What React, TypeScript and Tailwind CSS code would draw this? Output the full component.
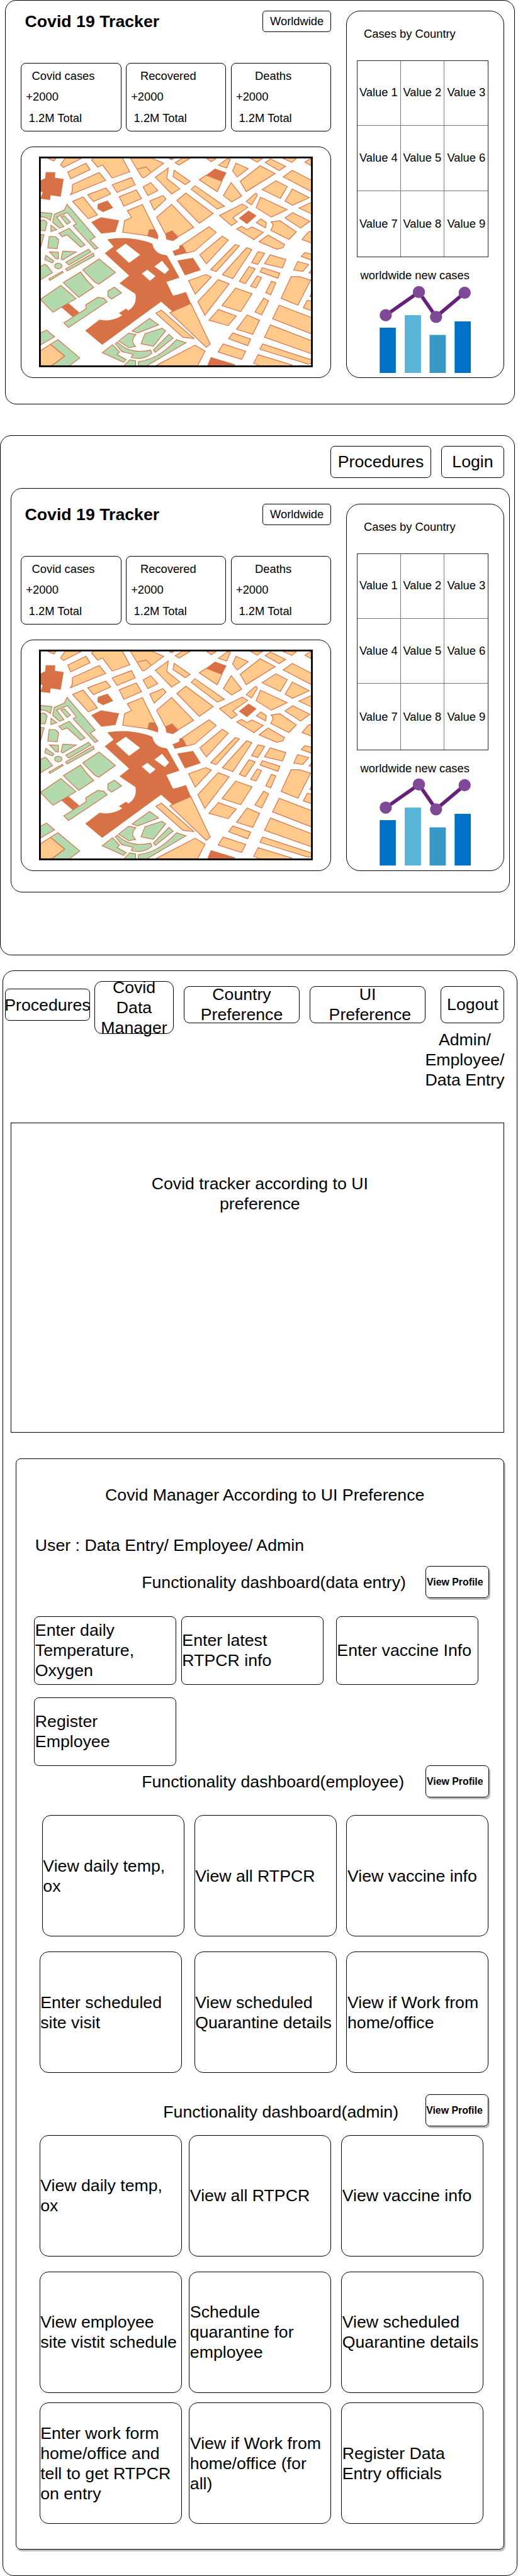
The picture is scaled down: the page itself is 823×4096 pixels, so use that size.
import type { ReactNode } from "react";

/* The page sets --spacing to 0.834px, so every spacing class counts design units. */

const frame = "outline outline-1 -outline-offset-1 outline-black";

const westBlocks = [
  "92,67 127,82 138,67",
  "190,67 165,105 182,119 285,67",
  "206,145 310,95 334,132 223,184",
  "342,75 378,117 405,105 460,180 561,144 517,62 360,62",
  "565,67 630,175 643,178 755,95 690,67",
  "785,67 800,75 812,67",
  "233,217 386,148 423,193 221,275 232,257",
  "320,275 424,237 452,270 353,314",
  "460,218 571,177 592,219 488,262",
  "500,287 598,248 628,297 527,341",
  "637,231 680,206 721,252 665,280",
  "707,175 781,122 772,181 847,241 800,271",
  "675,311 750,280 768,301 700,363",
  "234,313 295,288 376,391 324,413",
  "546,367 633,331 705,476 673,476 664,510 520,490 531,424 571,405",
  "714,404 800,331 926,461 838,516 803,482 764,499",
  "50,1168 107,1131 189,1199 115,1253 50,1253",
];

const eastBlocks = [
  "-20,92 3,105 65,67 20,67",
  "-25,135 -32,171 38,217 66,199",
  "-10,308 41,266 198,383 118,438",
  "-130,953 -99,935 87,1098 25,1091",
  "-50,950 70,897 181,1130 158,1148",
  "-130,1253 94,1136 151,1170 109,1253",
  "160,67 187,86 215,67",
  "227,107 280,68 296,72 275,122",
  "328,95 398,126 335,174 309,139",
  "157,163 248,198 221,258 118,190",
  "411,67 450,89 480,67",
  "495,91 525,70 612,113 575,137",
  "595,67 648,90 674,67",
  "757,67 722,88 757,108",
  "352,198 466,109 552,154 386,257",
  "598,173 650,136 760,192 760,258",
  "300,206 361,282 304,316 256,280",
  "94,223 262,341 221,357 72,244",
  "477,246 557,195 621,229 582,296",
  "650,242 747,292 652,335 609,312",
  "386,314 437,269 446,269 449,275 447,285 417,333",
  "468,289 621,360 530,403 443,349",
  "764,317 688,351 764,387",
  "234,394 364,328 395,348 310,407 335,430 302,452",
  "445,435 470,413 502,435 497,465",
  "529,431 579,424 673,487 631,531 527,480 541,448",
  "608,408 652,378 751,427 697,466",
  "332,471 360,456 392,475 418,459 484,490 431,532",
  "460,544 512,506 606,560 596,578 562,587",
  "764,488 745,486 705,531 764,553",
  "20,562 174,458 215,491 91,598 45,609",
  "250,512 284,535 159,671 121,619",
  "324,560 348,567 215,715 183,704",
  "389,578 419,590 310,755 250,733",
  "454,601 492,611 452,674 417,663",
  "523,619 613,646 594,694 491,670",
  "764,616 721,606 701,628 764,651",
  "681,657 744,674 710,714 658,706",
  "764,700 745,722 764,726",
  "402,687 438,699 382,784 347,770",
  "479,692 579,724 567,753 466,717",
  "450,740 475,749 442,808 411,799",
  "57,767 155,732 187,746 95,844",
  "226,761 289,785 150,965 110,887",
  "326,809 420,842 355,944 248,910",
  "531,770 556,779 527,848 498,836",
  "643,744 690,744 755,764 682,907 586,868",
  "764,830 750,857 764,860",
  "764,884 735,880 713,922 764,940",
  "486,867 515,882 475,963 436,946",
  "575,907 764,980 764,1073 537,985",
  "228,932 330,969 283,1024 173,993",
  "392,963 463,994 424,1074 331,1045",
  "525,1020 764,1112 764,1187 491,1090",
  "309,1066 412,1101 395,1139 286,1099",
  "480,1129 764,1222 757,1240 743,1245 465,1160",
  "254,1129 384,1171 360,1218 226,1175",
  "454,1190 648,1249 640,1256 470,1256 429,1240",
];

const parks = [
  "M50,376L116,383L107,422Q80,400 50,402Z",
  "M50,424Q75,412 88,438L76,482L50,480Z",
  "M110,450L144,475L110,486Z",
  "M202,330L363,517L334,535L379,580L361,588L237,452L256,442L204,377L143,403L184,457L159,467L120,433L129,388L187,362Z",
  "M167,402L187,395L222,432L202,445Z",
  "M155,496L214,467L305,562L281,575L203,505L175,515Z",
  "M50,502L71,504L50,580Z",
  "M100,514L136,515L154,533L146,584L92,580Z",
  "M102,602L152,604L152,643L137,640Z",
  "M178,598L255,602L177,648L168,642Z",
  "M81,622L126,653L118,665L75,647Z",
  "M195,661L325,587L339,603L213,677Z",
  "M193,700L351,610L358,626L203,711Z",
  "M98,757L176,713L180,720L103,766Z",
  "M50,686L74,673L85,678L119,720L50,762Z",
  "M292,705L385,643L479,720L385,786Q370,783 360,774Z",
  "M181,778L280,717Q310,765 355,805L269,862Z",
  "M50,874L167,794L253,869L122,948Z",
  "M437,825L473,804L514,837L457,872L435,856Z",
  "M184,1008L312,927L309,905L379,862L413,868L431,888L211,1035Z",
  "M50,1067L85,1049L131,1088L50,1135Z",
  "M107,1131L150,1104L275,1209L212,1256L111,1256L189,1199Z",
  "M574,1055L674,983L726,1020L606,1066Z",
  "M497,1112L555,1067L596,1076Q560,1110 594,1143L555,1150Z",
  "M648,1070L745,1039L766,1054L695,1142L625,1128Z",
  "M785,1074L808,1096L706,1178L696,1163Z",
  "M404,1179L462,1133L502,1175L488,1190L540,1218L525,1234Z",
  "M478,1128L490,1118Q560,1190 680,1164L687,1182Q640,1225 568,1206L580,1188L516,1173Z",
  "M611,1230Q720,1220 828,1105L882,1122L655,1256L608,1256Z",
  "M560,1220L594,1226L594,1256L525,1256Z",
];

const landmarks = [
  "M80,146L135,147L133,178L183,186L166,286L109,278L105,305L50,298L63,260L50,257L50,194L78,180Z",
  "M378,328L434,309L466,350L408,375L375,356Z",
  "M340,432L396,404L500,421L479,488L398,498Z",
  "M168,918L212,897L272,949L234,975Z",
  "M673,476L708,476L722,502L722,530L662,512Z",
  "M764,499L803,482L838,520L808,540L770,531Z",
  "M432,530Q570,508 690,555Q700,615 773,622L845,750L770,774L808,852L840,845L882,832L910,897L805,944L740,887L403,1134L306,1053L388,990Q460,1005 518,965L498,953L540,927L553,938Q605,905 593,843L502,782L557,738L418,610L468,572ZM538,555L620,619L557,665L481,595ZM745,653L786,703L761,729L702,686ZM661,705L708,742L676,768L630,726Z",
  "M860,562L885,609L818,625L805,599L843,583L844,566Z",
  "M832,652L923,636L967,707L876,736Z",
  "M1048,125L1114,149L1088,198L997,163Z",
  "M1240,366L1286,395L1231,443L1184,410Z",
  "M1024,1204L1163,1246L1160,1256L1003,1256Z",
];

function CityMap() {
  return (
    <svg className="block h-401.5 w-521.5" viewBox="42 57 1565 1205" preserveAspectRatio="none">
      <rect x="42" y="57" width="1565" height="1205" fill="#fff" />
      <g stroke="#d77148" strokeWidth="4.2">
        <g fill="#b3d9ae">
          {parks.map((d) => (
            <path key={d} d={d} />
          ))}
          <ellipse cx="152" cy="683" rx="21" ry="16" />
        </g>
        <g fill="#ffca8c">
          {westBlocks.map((p) => (
            <polygon key={p} points={p} />
          ))}
          <polyline points="605,128 655,116 682,146" fill="none" />
          <g transform="translate(840 0)">
            {eastBlocks.map((p) => (
              <polygon key={p} points={p} />
            ))}
          </g>
        </g>
      </g>
      <g fill="#d87246" fillRule="evenodd">
        {landmarks.map((d) => (
          <path key={d} d={d} />
        ))}
      </g>
      <rect x="47" y="62" width="1555" height="1195" fill="none" stroke="#000" strokeWidth="10" />
    </svg>
  );
}

function CasesChart() {
  return (
    <svg className="block h-166 w-174" viewBox="723 545 174 166">
      <rect x="723.3" y="624.2" width="30.7" height="86.6" fill="#0072c6" />
      <rect x="771" y="600.3" width="31" height="110.5" fill="#59b4d9" />
      <rect x="818.3" y="638" width="31" height="72.8" fill="#3999c6" />
      <rect x="866" y="612.2" width="31" height="98.6" fill="#0072c6" />
      <polyline points="735,600.5 798,556.2 830.7,603.5 885,557.7" fill="none" stroke="#68217a" strokeWidth="6.8" />
      <g fill="#804998">
        <circle cx="734.8" cy="600.4" r="11.6" />
        <circle cx="798" cy="556.3" r="11.6" />
        <circle cx="830.7" cy="603.6" r="11.6" />
        <circle cx="885.2" cy="557.6" r="11.6" />
      </g>
    </svg>
  );
}

function StatCard({ title }: { title: string }) {
  return (
    <div className={`h-131 w-191 rounded-[8px] pt-5 ${frame}`}>
      <div className="flex h-40 w-161 items-center justify-center">{title}</div>
      <div className="flex h-40 w-81 items-center justify-center">+2000</div>
      <div className="flex h-40 w-131 items-center justify-center">1.2M Total</div>
    </div>
  );
}

function ValueRow({ values, last }: { values: number[]; last?: boolean }) {
  return (
    <div className={`grid grid-cols-3 ${last ? "h-126" : "h-124.5 border-b border-[#777]"}`}>
      {values.map((v, i) => (
        <div
          key={v}
          className={`flex items-center justify-center whitespace-nowrap ${i < 2 ? "border-r border-[#777]" : ""}`}
        >
          Value {v}
        </div>
      ))}
    </div>
  );
}

function Tracker() {
  return (
    <div className="flex w-921 justify-between text-[18.35px] leading-[22px]">
      <div className="w-591">
        <div className="flex h-41 justify-between">
          <h1 className="flex w-271 items-center justify-center text-[26.69px] font-bold leading-[32px]">
            Covid 19 Tracker
          </h1>
          <div className={`flex w-131 items-center justify-center rounded-[5px] ${frame}`}>Worldwide</div>
        </div>
        <div className="mt-59 flex justify-between">
          <StatCard title="Covid cases" />
          <StatCard title="Recovered" />
          <StatCard title="Deaths" />
        </div>
        <div className={`mt-29 h-441 rounded-[20px] pl-34 pt-19 ${frame}`}>
          <CityMap />
        </div>
      </div>
      <div className={`h-701 w-301 rounded-[22px] pl-20 ${frame}`}>
        <div className="mt-25 flex h-40 w-201 items-center justify-center">Cases by Country</div>
        <div className="mt-30 h-375 w-250 outline outline-1 -outline-offset-1 outline-[#222]">
          <ValueRow values={[1, 2, 3]} />
          <ValueRow values={[4, 5, 6]} />
          <ValueRow values={[7, 8, 9]} last />
        </div>
        <div className="mt-15 flex h-40 w-221 items-center justify-center">worldwide new cases</div>
        <div className="ml-43">
          <CasesChart />
        </div>
      </div>
    </div>
  );
}

function NavButton({ className, children }: { className: string; children: ReactNode }) {
  return (
    <div className={`flex shrink-0 items-center justify-center whitespace-nowrap text-center ${frame} ${className}`}>
      {children}
    </div>
  );
}

function DashboardHeader({ className, textClass, children }: { className: string; textClass: string; children: ReactNode }) {
  return (
    <div className={`flex h-61 items-center justify-between ${className}`}>
      <div className={`shrink-0 whitespace-nowrap text-center ${textClass}`}>{children}</div>
      <div
        className={`flex h-61 w-121 shrink-0 items-center whitespace-nowrap rounded-[7px] bg-white pl-2 text-[15.85px] font-bold leading-[19px] shadow-[2px_3px_0_#bdbdbd] ${frame}`}
      >
        View Profile
      </div>
    </div>
  );
}

function Card({ lines, className }: { lines: string[]; className: string }) {
  return (
    <div className={`flex w-271 flex-col justify-center whitespace-nowrap pl-2 ${frame} ${className}`}>
      {lines.map((line) => (
        <div key={line}>{line}</div>
      ))}
    </div>
  );
}

const small = "h-131 rounded-[8px]";
const large = "h-231 rounded-[14px]";

export default function App() {
  return (
    <div className="h-[4096px] w-[823px] overflow-hidden bg-white font-['Liberation_Sans',Arial,sans-serif] text-[26.69px] leading-[32px] text-black [--spacing:0.834px]">
      <section className={`ml-10 h-771 w-971 rounded-[18px] pl-30 pt-20 ${frame}`}>
        <Tracker />
      </section>

      <section className={`mt-59 h-991 w-981 rounded-[18px] pl-20 pt-20 ${frame}`}>
        <div className="flex w-941 justify-end gap-19">
          <NavButton className="h-61 w-191 rounded-[7px]">Procedures</NavButton>
          <NavButton className="h-61 w-121 rounded-[7px]">Login</NavButton>
        </div>
        <div className={`mt-19 h-771 w-951 rounded-[18px] pl-20 pt-30 ${frame}`}>
          <Tracker />
        </div>
      </section>

      <section className={`ml-5 mt-29 h-3061 w-981 rounded-[18px] pt-20 ${frame}`}>
        <nav className="flex h-101 items-center pl-5">
          <NavButton className="mb-9 h-61 w-161 rounded-[7px]">Procedures</NavButton>
          <NavButton className="ml-9 h-101 w-151 rounded-[12px]">
            Covid
            <br />
            Data
            <br />
            Manager
          </NavButton>
          <NavButton className="mb-10 ml-19 h-71 w-221 rounded-[9px]">
            Country
            <br />
            Preference
          </NavButton>
          <NavButton className="mb-10 ml-19 h-71 w-221 rounded-[9px]">
            UI
            <br />
            &nbsp;Preference
          </NavButton>
          <NavButton className="mb-10 ml-29 h-71 w-121 rounded-[9px]">Logout</NavButton>
        </nav>
        <div className="-mt-8 ml-800 w-161 whitespace-nowrap text-center">
          Admin/
          <br />
          Employee/
          <br />
          Data Entry
        </div>
        <div className={`ml-15 mt-62 h-591 w-941 pt-97 ${frame}`}>
          <div className="ml-255 w-440 text-center">
            Covid tracker according to UI
            <br />
            preference
          </div>
        </div>

        <div className={`ml-25 mt-49 h-2081 w-931 rounded-[8px] bg-white shadow-[2px_3px_0_#bdbdbd] ${frame}`}>
          <div className="flex h-101 items-center justify-center pl-18 pt-40">Covid Manager According to UI Preference</div>
          <div className="flex h-129 items-center pl-37">User : Data Entry/ Employee/ Admin</div>

          <DashboardHeader className="-mt-24 w-902" textClass="w-500 ml-240">
            Functionality dashboard(data entry)
          </DashboardHeader>
          <div className="ml-35 mt-34 flex">
            <Card className={small} lines={["Enter daily", "Temperature,", "Oxygen"]} />
            <Card className={`ml-9 ${small}`} lines={["Enter latest", "RTPCR info"]} />
            <Card className={`ml-24 ${small}`} lines={["Enter vaccine Info"]} />
          </div>
          <Card className={`ml-35 mt-24 ${small}`} lines={["Register", "Employee"]} />

          <DashboardHeader className="-mt-1 w-902" textClass="w-500 ml-240">
            Functionality dashboard(employee)
          </DashboardHeader>
          <div className="ml-50 mt-34 flex">
            <Card className={large} lines={["View daily temp,", "ox"]} />
            <Card className={`ml-19 ${large}`} lines={["View all RTPCR"]} />
            <Card className={`ml-19 ${large}`} lines={["View vaccine info"]} />
          </div>
          <div className="ml-45 mt-29 flex">
            <Card className={large} lines={["Enter scheduled", "site visit"]} />
            <Card className={`ml-24 ${large}`} lines={["View scheduled", "Quarantine details"]} />
            <Card className={`ml-19 ${large}`} lines={["View if Work from", "home/office"]} />
          </div>

          <DashboardHeader className="mt-41 w-901" textClass="w-500 ml-255 pt-6">
            Functionality dashboard(admin)
          </DashboardHeader>
          <div className="ml-45 mt-17 flex">
            <Card className={large} lines={["View daily temp,", "ox"]} />
            <Card className={`ml-14 ${large}`} lines={["View all RTPCR"]} />
            <Card className={`ml-19 ${large}`} lines={["View vaccine info"]} />
          </div>
          <div className="ml-45 mt-29 flex">
            <Card className={large} lines={["View employee", "site vistit schedule"]} />
            <Card className={`ml-14 ${large}`} lines={["Schedule", "quarantine for", "employee"]} />
            <Card className={`ml-19 ${large}`} lines={["View scheduled", "Quarantine details"]} />
          </div>
          <div className="ml-45 mt-19 flex">
            <Card className={large} lines={["Enter work form", "home/office and", "tell to get RTPCR", "on entry"]} />
            <Card className={`ml-14 ${large}`} lines={["View if Work from", "home/office (for", "all)"]} />
            <Card className={`ml-19 ${large}`} lines={["Register Data", "Entry officials"]} />
          </div>
        </div>
      </section>
    </div>
  );
}
